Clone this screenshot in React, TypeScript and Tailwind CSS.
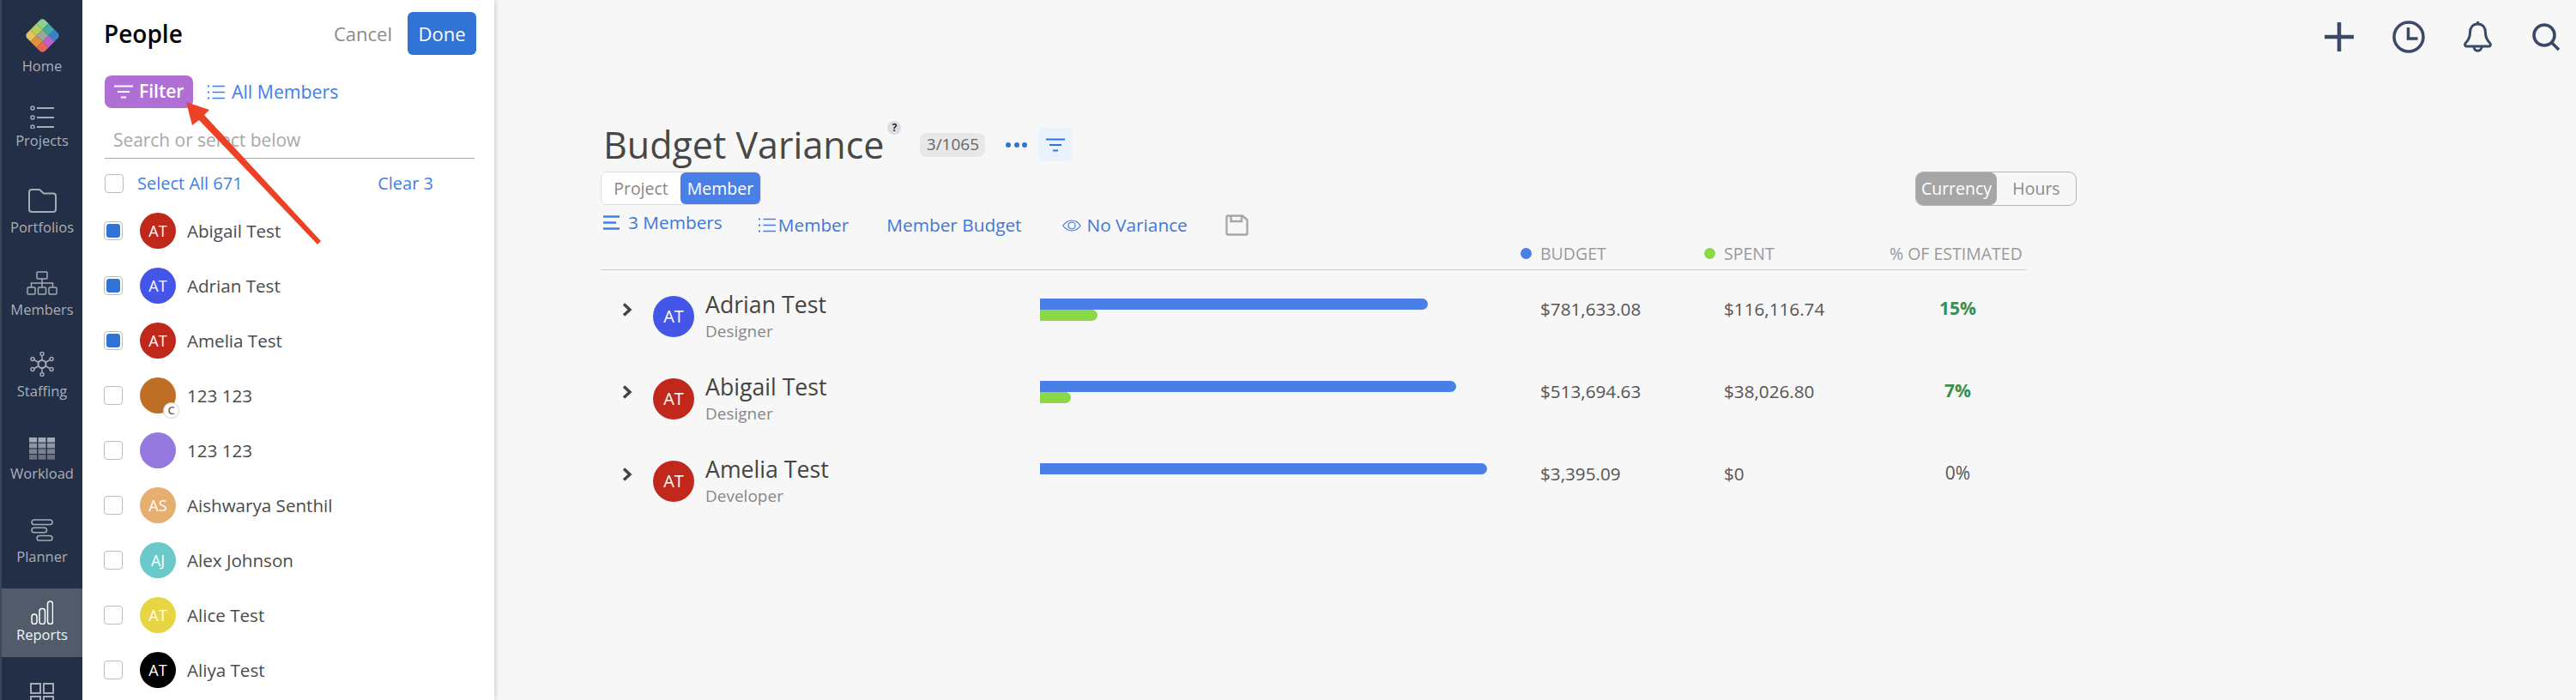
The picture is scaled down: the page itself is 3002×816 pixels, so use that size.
import React from "react";

const FONT = "font-['Open_Sans',sans-serif]";

function Logo() {
  const cells = [
    ["#8fcf8f", "#45a8a5", "#3a83c4"],
    ["#b5cf63", "#9aa69a", "#bb62cf"],
    ["#e1c466", "#e08f3c", "#e8645a"],
  ];
  return (
    <svg width="39" height="39" viewBox="0 0 39 39">
      <defs>
        <clipPath id="logo-clip">
          <rect x="4.5" y="4.5" width="30" height="30" rx="5" />
        </clipPath>
      </defs>
      <g transform="rotate(45 19.5 19.5)" clipPath="url(#logo-clip)">
        {cells.map((row, r) =>
          row.map((c, i) => (
            <rect key={`${r}-${i}`} x={4.5 + i * 10} y={4.5 + r * 10} width="10" height="10" fill={c} />
          ))
        )}
      </g>
    </svg>
  );
}

function ProjectsIcon() {
  return (
    <svg width="28" height="27" viewBox="0 0 28 27" fill="none" stroke="#a5aab4" strokeWidth="1.5">
      <circle cx="3" cy="3" r="2" />
      <circle cx="3" cy="14" r="2" />
      <circle cx="3" cy="25" r="2" />
      <path d="M8 3h20M8 14h20M8 25h20" strokeWidth="2" />
    </svg>
  );
}

function FolderIcon() {
  return (
    <svg width="33" height="28" viewBox="0 0 33 28" fill="none" stroke="#a5aab4" strokeWidth="2">
      <path d="M1 4a3 3 0 0 1 3-3h9l5 4.5h11a3 3 0 0 1 3 3V24a3 3 0 0 1-3 3H4a3 3 0 0 1-3-3z" strokeLinejoin="round" />
    </svg>
  );
}

function OrgIcon() {
  return (
    <svg width="36" height="28" viewBox="0 0 36 28" fill="none" stroke="#a5aab4" strokeWidth="1.5">
      <rect x="12" y="1" width="12" height="8" rx="1" />
      <rect x="1" y="19" width="9" height="8" rx="1" />
      <rect x="13.5" y="19" width="9" height="8" rx="1" />
      <rect x="26" y="19" width="9" height="8" rx="1" />
      <path d="M18 9v10M5.5 19v-5h25v5" />
    </svg>
  );
}

function StaffingIcon() {
  return (
    <svg width="28" height="29" viewBox="0 0 28 29" fill="none" stroke="#a5aab4" strokeWidth="1.5">
      <circle cx="14" cy="14.5" r="4.5" strokeWidth="2" />
      <circle cx="14" cy="2.5" r="2" />
      <circle cx="14" cy="26.5" r="2" />
      <circle cx="3" cy="8.5" r="2" />
      <circle cx="25" cy="8.5" r="2" />
      <circle cx="3" cy="20.5" r="2" />
      <circle cx="25" cy="20.5" r="2" />
      <path d="M14 4.5V10M14 19v5.5M5 9.5l5 3M23 9.5l-5 3M5 19.5l5-3M23 19.5l-5-3" />
    </svg>
  );
}

function WorkloadIcon() {
  const rows = ["#a5aab4", "#8f95a1", "#7b8291", "#697182"];
  return (
    <svg width="30" height="26" viewBox="0 0 30 26">
      {rows.map((c, r) =>
        [0, 10.5, 21].map((x) => <rect key={`${r}-${x}`} x={x} y={r * 6.7} width="9" height="5.6" fill={c} />)
      )}
    </svg>
  );
}

function PlannerIcon() {
  return (
    <svg width="26" height="26" viewBox="0 0 26 26" fill="none" stroke="#a5aab4" strokeWidth="1.5">
      <rect x="1" y="1" width="24" height="5.5" rx="2.75" />
      <rect x="1" y="10.2" width="17.5" height="5.5" rx="2.75" />
      <rect x="7" y="19.5" width="18" height="5.5" rx="2.75" />
    </svg>
  );
}

function ReportsIcon() {
  return (
    <svg width="26" height="28" viewBox="0 0 26 28" fill="none" stroke="#ffffff" strokeWidth="1.5">
      <rect x="1" y="16" width="6" height="11.5" rx="3" />
      <rect x="10" y="9.5" width="6.5" height="18" rx="3" />
      <rect x="19.5" y="1" width="6" height="26.5" rx="3" />
    </svg>
  );
}

function GridIcon() {
  return (
    <svg width="28" height="28" viewBox="0 0 28 28" fill="none" stroke="#a5aab4" strokeWidth="2">
      <rect x="1" y="1" width="11" height="11" />
      <rect x="16" y="1" width="11" height="11" />
      <rect x="1" y="16" width="11" height="11" />
      <rect x="16" y="16" width="11" height="11" />
    </svg>
  );
}

function Sidebar() {
  const label = "text-[16.5px] leading-[20px] text-[#a9aeb8]";
  return (
    <div className="flex h-full w-[96px] shrink-0 flex-col items-center overflow-hidden border-l-2 border-[#3b4659] bg-[#232f47]">
      <div className="flex h-[100px] w-full shrink-0 flex-col items-center gap-[6px] pt-[22px]">
        <Logo />
        <span className={label}>Home</span>
      </div>
      <div className="flex h-[100px] w-full shrink-0 flex-col items-center gap-[4px] pt-[23px]">
        <ProjectsIcon />
        <span className={label}>Projects</span>
      </div>
      <div className="flex h-[96px] w-full shrink-0 flex-col items-center gap-[7px] pt-[20px]">
        <FolderIcon />
        <span className={label}>Portfolios</span>
      </div>
      <div className="flex h-[96px] w-full shrink-0 flex-col items-center gap-[7px] pt-[20px]">
        <OrgIcon />
        <span className={label}>Members</span>
      </div>
      <div className="flex h-[98px] w-full shrink-0 flex-col items-center gap-[7px] pt-[18px]">
        <StaffingIcon />
        <span className={label}>Staffing</span>
      </div>
      <div className="flex h-[96px] w-full shrink-0 flex-col items-center gap-[6px] pt-[20px]">
        <WorkloadIcon />
        <span className={label}>Workload</span>
      </div>
      <div className="flex h-[100px] w-full shrink-0 flex-col items-center gap-[8px] pt-[19px]">
        <PlannerIcon />
        <span className={label}>Planner</span>
      </div>
      <div className="flex h-[80px] w-full shrink-0 flex-col items-center gap-[2px] bg-[#515b6a] pt-[14px]">
        <ReportsIcon />
        <span className="text-[16.5px] leading-[20px] text-[#f2f3f5]">Reports</span>
      </div>
      <div className="flex w-full shrink-0 flex-col items-center pt-[30px]">
        <GridIcon />
      </div>
    </div>
  );
}

function FilterLines({ color, width = 22 }: { color: string; width?: number }) {
  return (
    <svg width={width} height={(width * 16) / 22} viewBox="0 0 22 16" fill="none" stroke={color} strokeWidth="2.2">
      <path d="M0 1.5h22M4 8h14M8 14.5h6" />
    </svg>
  );
}

function ListIcon({ color }: { color: string }) {
  return (
    <svg width="20" height="17" viewBox="0 0 20 17" fill="none" stroke={color}>
      <path d="M5.5 1.5H20M5.5 8.5H20M5.5 15.5H20" strokeWidth="1.5" />
      <path d="M0 1.5h2M0 8.5h2M0 15.5h2" strokeWidth="2" />
    </svg>
  );
}

function Checkbox({ checked }: { checked?: boolean }) {
  return (
    <span className="flex h-[22px] w-[22px] shrink-0 items-center justify-center rounded-[4px] border-[1.5px] border-[#bdbdbd] bg-white">
      {checked && <span className="h-[16px] w-[16px] rounded-[3px] bg-[#3274d6]" />}
    </span>
  );
}

type Person = { name: string; initials?: string; color: string; checked?: boolean; badge?: boolean };

const PEOPLE: Person[] = [
  { name: "Abigail Test", initials: "AT", color: "bg-[#c0281c]", checked: true },
  { name: "Adrian Test", initials: "AT", color: "bg-[#4356e8]", checked: true },
  { name: "Amelia Test", initials: "AT", color: "bg-[#c0281c]", checked: true },
  { name: "123 123", color: "bg-[#bf6e26]", badge: true },
  { name: "123 123", color: "bg-[#9579df]" },
  { name: "Aishwarya Senthil", initials: "AS", color: "bg-[#e6ae70]" },
  { name: "Alex Johnson", initials: "AJ", color: "bg-[#69c9cb]" },
  { name: "Alice Test", initials: "AT", color: "bg-[#e7d544]" },
  { name: "Aliya Test", initials: "AT", color: "bg-black" },
];

function PeoplePanel() {
  return (
    <div className="z-10 flex h-full w-[480px] shrink-0 flex-col bg-white shadow-[2px_0_5px_rgba(0,0,0,0.14)]">
      <div className="flex items-center justify-between pl-[25px] pr-[21px] pt-[14px]">
        <span className="text-[28px] font-semibold leading-[50px] text-black">People</span>
        <div className="flex items-center gap-[18px]">
          <span className="text-[22px] text-[#8a8a8a]">Cancel</span>
          <span className="flex h-[50px] w-[80px] items-center justify-center rounded-[6px] bg-[#3274d6] text-[22px] font-medium text-white">
            Done
          </span>
        </div>
      </div>

      <div className="mt-[24px] flex items-center gap-[17px] pl-[26px]">
        <span className="flex h-[38px] w-[103px] items-center gap-[7px] rounded-[8px] bg-[#b06fd4] pl-[11px]">
          <FilterLines color="#ffffff" />
          <span className="text-[21px] font-semibold text-white">Filter</span>
        </span>
        <span className="flex items-center gap-[8px] text-[21.3px] font-medium text-[#3f7fe8]">
          <ListIcon color="#3f7fe8" />
          All Members
        </span>
      </div>

      <div className="ml-[26px] mt-[20px] flex h-[39px] w-[431px] items-center border-b-[1.5px] border-[#aaaaaa] pb-[3px] pl-[10px] text-[20.9px] text-[#a8a8a8]">
        Search or select below
      </div>

      <div className="ml-[26px] mt-[18px] flex h-[22px] w-[383px] items-center gap-[16px] text-[20px] text-[#3f7fe8]">
        <Checkbox />
        <span className="font-medium">Select All 671</span>
        <span className="ml-auto">Clear 3</span>
      </div>

      <div className="mt-[12px] flex flex-col pl-[25px]">
        {PEOPLE.map((p, i) => (
          <div key={i} className="flex h-[64px] items-center">
            <Checkbox checked={p.checked} />
            <span
              className={`relative ml-[20px] flex h-[42px] w-[42px] shrink-0 items-center justify-center rounded-full text-[18px] font-medium text-white ${p.color}`}
            >
              {p.initials}
              {p.badge && (
                <span className="absolute -bottom-[6px] -right-[4px] flex h-[19px] w-[19px] items-center justify-center rounded-full border border-[#d5d5d5] bg-white text-[13px] font-semibold text-[#666666]">
                  C
                </span>
              )}
            </span>
            <span className="ml-[13px] text-[20.6px] text-[#4a4a4a]">{p.name}</span>
          </div>
        ))}
      </div>
    </div>
  );
}

function TopIcons() {
  const c = "#3a4a66";
  return (
    <div className="flex items-center justify-end gap-[45px] pr-[19px] pt-[24px]">
      <svg width="34" height="34" viewBox="0 0 34 34" stroke={c} strokeWidth="4.5" fill="none">
        <path d="M17 0v34M0 17h34" />
      </svg>
      <svg width="38" height="38" viewBox="0 0 38 38" stroke={c} strokeWidth="3.5" fill="none">
        <circle cx="19" cy="19" r="17" />
        <path d="M18.5 8v13h11" />
      </svg>
      <svg width="33" height="38" viewBox="0 0 33 38" stroke={c} strokeWidth="3" fill="none" strokeLinejoin="round">
        <path d="M16.5 1v3M16.5 4c-6 0-9 4.5-9 10 0 6-2 9-5 12-1.5 1.5-1 4 1 4h26c2 0 2.500-2.500 1-4-3-3-5-6-5-12 0-5.500-3-10-9-10z" />
        <path d="M12 30c0 7 9 7 9 0" />
      </svg>
      <svg className="ml-[2px]" width="32" height="33" viewBox="0 0 32 33" stroke={c} strokeWidth="3.6" fill="none">
        <circle cx="14" cy="14" r="12" />
        <path d="M22.500 22.500L31 31" />
      </svg>
    </div>
  );
}

const REPORT = [
  {
    name: "Adrian Test",
    role: "Designer",
    color: "bg-[#4356e8]",
    budget: 452,
    spent: 67,
    budgetText: "$781,633.08",
    spentText: "$116,116.74",
    pct: "15%",
  },
  {
    name: "Abigail Test",
    role: "Designer",
    color: "bg-[#c0281c]",
    budget: 485,
    spent: 36,
    budgetText: "$513,694.63",
    spentText: "$38,026.80",
    pct: "7%",
  },
  {
    name: "Amelia Test",
    role: "Developer",
    color: "bg-[#c0281c]",
    budget: 521,
    spent: 0,
    budgetText: "$3,395.09",
    spentText: "$0",
    pct: "0%",
  },
];

const COLS = "grid grid-cols-[512px_583px_214px_193px_159px]";

function Report() {
  const link = "text-[20.8px] text-[#3f78d8]";
  return (
    <div className="pl-[124px]">
      <div className="mt-[87px] flex h-[39px] items-center pl-[3px]">
        <span className="text-[43px] font-medium leading-none text-[#474747]">Budget Variance</span>
        <span className="ml-[4px] flex h-[16px] w-[16px] -translate-y-[20px] items-center justify-center rounded-full bg-[#dddddd] text-[12px] font-semibold text-black">
          ?
        </span>
        <span className="ml-[22px] flex h-[28px] w-[76px] items-center justify-center rounded-[8px] bg-[#e8e8e8] text-[19px] text-[#666666]">
          3/1065
        </span>
        <span className="ml-[24px] flex w-[25px] justify-between">
          <span className="h-[6px] w-[6px] rounded-full bg-[#3274d6]" />
          <span className="h-[6px] w-[6px] rounded-full bg-[#3274d6]" />
          <span className="h-[6px] w-[6px] rounded-full bg-[#3274d6]" />
        </span>
        <span className="ml-[13px] flex h-[39px] w-[39px] items-center justify-center rounded-[6px] bg-[#eaf2fd]">
          <FilterLines color="#3274d6" />
        </span>
      </div>

      <div className="mt-[12px] flex h-[40px] w-[1720px] items-start justify-between">
        <div className="flex h-[39px] w-[187px] items-center rounded-[7px] border border-[#dddddd] bg-white text-[19.5px]">
          <span className="flex-1 text-center text-[#888888]">Project</span>
          <span className="flex h-full w-[93px] items-center justify-center rounded-[6px] bg-[#4a7fe8] font-medium text-white">
            Member
          </span>
        </div>
        <div className="flex h-[40px] w-[188px] items-center rounded-[9px] border border-[#b5b5b5] text-[19.5px]">
          <span className="flex h-full w-[94px] items-center justify-center rounded-[8px] bg-[#a6a6a6] font-medium text-white">
            Currency
          </span>
          <span className="flex-1 text-center text-[#8a8a8a]">Hours</span>
        </div>
      </div>

      <div className="mt-[8px] flex h-[29px] items-center pl-[3px]">
        <span className={`flex -translate-y-[3px] items-center gap-[10px] ${link}`}>
          <svg width="19" height="17" viewBox="0 0 19 17" stroke="#3f7fe8" strokeWidth="2.6" fill="none">
            <path d="M0 1.500h19M0 8.500h15M0 15.500h19" />
          </svg>
          3 Members
        </span>
        <span className={`ml-[42px] flex items-center gap-[3px] ${link}`}>
          <ListIcon color="#3f7fe8" />
          Member
        </span>
        <span className={`ml-[44px] ${link}`}>Member Budget</span>
        <span className={`ml-[47px] flex items-center gap-[7px] ${link}`}>
          <svg width="22" height="14" viewBox="0 0 22 14" stroke="#3f78d8" strokeWidth="1.2" fill="none">
            <path d="M0.800 7C4 2.500 7.500 1 11 1s7 1.500 10.200 6C18 11.500 14.500 13 11 13S4 11.500 0.800 7z" />
            <circle cx="11" cy="7" r="4" />
          </svg>
          No Variance
        </span>
        <svg className="ml-[44px]" width="27" height="25" viewBox="0 0 27 25" fill="none" stroke="#a8a8a8" strokeWidth="2.4">
          <path d="M1.500 3a1.500 1.500 0 0 1 1.500-1.500h17l5.500 5V22a1.500 1.500 0 0 1-1.500 1.500H3A1.500 1.500 0 0 1 1.500 22z" strokeLinejoin="round" />
          <path d="M6.500 1.500V8h12.500V1.500" />
        </svg>
      </div>

      <div className={`${COLS} h-[38px] w-[1661px] items-center border-b-[1.5px] border-[#cccccc] text-[19.5px] text-[#9a9a9a]`}>
        <span />
        <span />
        <span className="-ml-[23px] flex items-center gap-[10px]">
          <span className="h-[13px] w-[13px] rounded-full bg-[#4a7fe8]" />
          BUDGET
        </span>
        <span className="-ml-[23px] flex items-center gap-[10px]">
          <span className="h-[13px] w-[13px] rounded-full bg-[#8ad845]" />
          SPENT
        </span>
        <span>% OF ESTIMATED</span>
      </div>

      <div className="pt-[6px]">
        {REPORT.map((r) => (
          <div key={r.name} className={`${COLS} h-[96px] w-[1661px] items-start`}>
            <div className="flex pl-[25px]">
              <svg className="mt-[32px]" width="12" height="16" viewBox="0 0 12 16" fill="none" stroke="#444444" strokeWidth="3.4">
                <path d="M2 1.500L9 8l-7 6.500" />
              </svg>
              <span
                className={`ml-[24px] mt-[24px] flex h-[48px] w-[48px] items-center justify-center rounded-full text-[20px] font-medium text-white ${r.color}`}
              >
                AT
              </span>
              <div className="ml-[13px] mt-[16px] flex flex-col">
                <span className="text-[26.700px] font-medium leading-[36px] text-[#444444]">{r.name}</span>
                <span className="text-[19px] leading-[26px] text-[#888888]">{r.role}</span>
              </div>
            </div>
            <div className="mt-[27px] flex flex-col">
              <span className="h-[13px] rounded-r-full bg-[#4a7fe8]" style={{ width: r.budget }} />
              {r.spent > 0 && <span className="h-[13px] rounded-r-full bg-[#8ad845]" style={{ width: r.spent }} />}
            </div>
            <span className="mt-[24px] text-[20.7px] leading-[30px] text-[#555555]">{r.budgetText}</span>
            <span className="mt-[24px] text-[20.7px] leading-[30px] text-[#555555]">{r.spentText}</span>
            <span
              className={`mt-[23px] text-center text-[21px] leading-[30px] ${
                r.pct === "0%" ? "text-[#555555]" : "font-bold text-[#3c8f50]"
              }`}
            >
              {r.pct}
            </span>
          </div>
        ))}
      </div>
    </div>
  );
}

export default function App() {
  return (
    <div className={`relative flex h-[816px] w-[3002px] overflow-hidden bg-[#f7f7f7] ${FONT}`}>
      <Sidebar />
      <PeoplePanel />
      <div className="min-w-0 flex-1">
        <TopIcons />
        <Report />
      </div>
      {/* annotation arrow on top of the screenshot */}
      <svg className="absolute left-0 top-0 z-20" width="600" height="300" viewBox="0 0 600 300">
        <path d="M217 119L244 128L238 134L374 281L370 285L232 140L224 146z" fill="#ec4125" />
      </svg>
    </div>
  );
}
